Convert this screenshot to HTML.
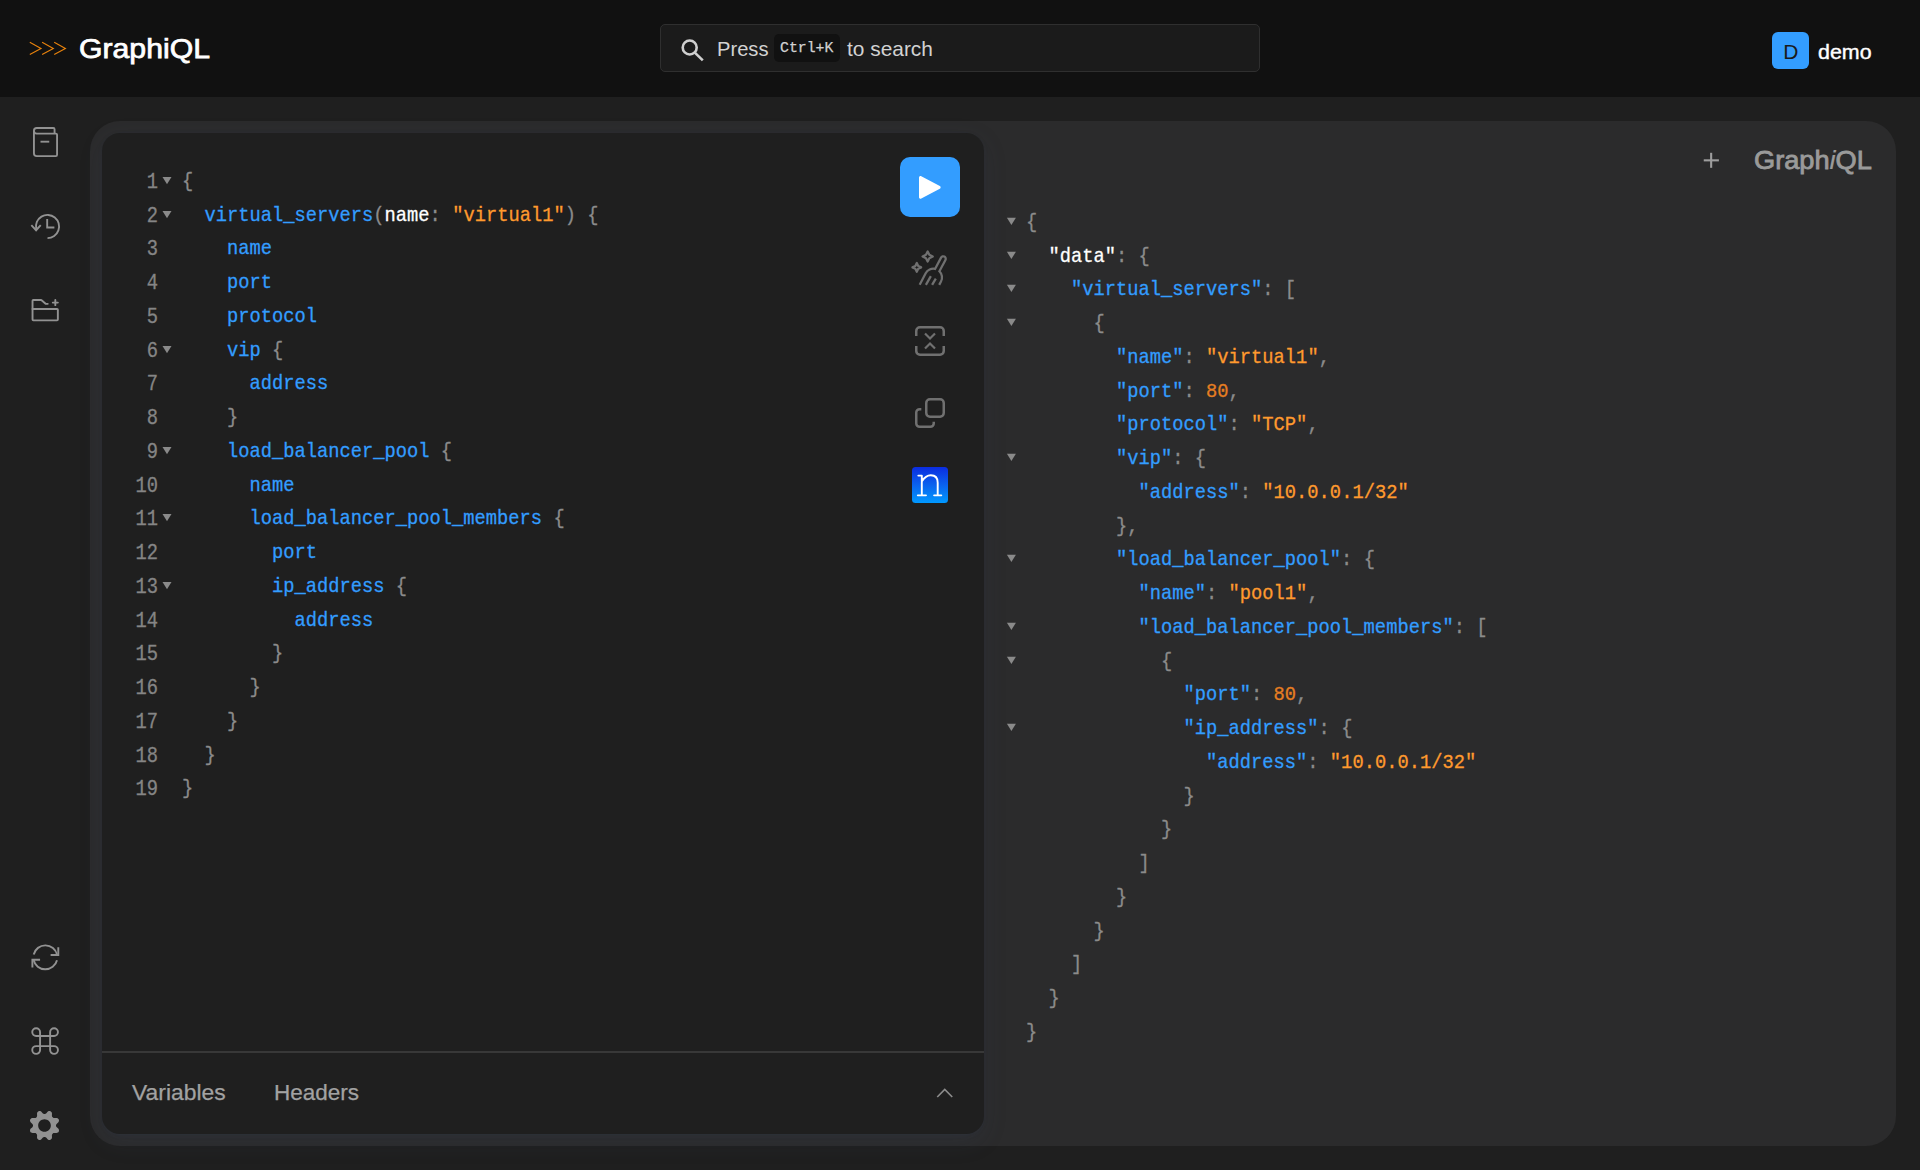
<!DOCTYPE html>
<html><head><meta charset="utf-8"><title>GraphiQL</title>
<style>
html,body{margin:0;padding:0}
body{width:1920px;height:1170px;overflow:hidden;position:relative;background:#1f1f1f;font-family:"Liberation Sans",sans-serif;color:#fff}
*{box-sizing:border-box}
.abs{position:absolute}
#hdr{position:absolute;left:0;top:0;width:1920px;height:97px;background:#111111}
#logo{position:absolute;left:78.5px;top:27.3px;font:27.6px/44px "Liberation Sans",sans-serif;color:#fff;white-space:nowrap;-webkit-text-stroke:.75px #fff;transform-origin:0 0;transform:scaleX(1.095)}
#search{position:absolute;left:660px;top:24px;width:600px;height:48px;border:1px solid #2f2f2f;border-radius:5px;background:#1b1b1b}
.stxt{position:absolute;top:33.5px;font:20.9px/30px "Liberation Sans",sans-serif;color:#d2d2d2;white-space:nowrap}
#kbd{position:absolute;left:774px;top:33.8px;width:66px;height:28.4px;border-radius:5px;background:#111}
#kbdt{position:absolute;left:780.3px;top:34.3px;font:15.5px/28px "Liberation Mono",monospace;color:#d2d2d2;white-space:nowrap;-webkit-text-stroke:.25px #d2d2d2;transform-origin:0 0;transform:scaleX(.957)}
#avatar{position:absolute;left:1772px;top:32px;width:36.5px;height:36.5px;border-radius:6px;background:#339dff}
#avl{position:absolute;left:1772.6px;top:32.6px;width:36.5px;height:36.5px;font:21px/37px "Liberation Sans",sans-serif;color:#1a1a1a;text-align:center}
#user{position:absolute;left:1818.4px;top:36.6px;font:21px/30px "Liberation Sans",sans-serif;color:#fff;white-space:nowrap;-webkit-text-stroke:.4px #fff;transform-origin:0 0;transform:scaleX(1.02)}
#sessions{position:absolute;left:90px;top:121px;width:1806px;height:1025px;border-radius:30px;background:#2b2b2c}
#editor{position:absolute;left:102px;top:133px;width:882px;height:1001px;border-radius:18px;background:#1f1f1f;box-shadow:0 7.5px 25px rgba(59,76,106,.13),0 1.7px 5.6px rgba(59,76,106,.077),0 .5px 1.7px rgba(59,76,106,.053)}
#divider{position:absolute;left:102px;top:1051.4px;width:882px;height:1.25px;background:#383838}
.tab{position:absolute;top:1076.8px;font:22.5px/32px "Liberation Sans",sans-serif;color:#a2a2a2;white-space:nowrap;-webkit-text-stroke:.25px #a2a2a2;transform-origin:0 0}
#glogo{position:absolute;left:1754px;top:139.6px;font:26.6px/40px "Liberation Sans",sans-serif;color:#9a9a9a;white-space:nowrap;-webkit-text-stroke:.85px #9a9a9a;transform-origin:0 0;transform:scaleX(1.022)}
#glogo i{-webkit-text-stroke:.2px #9a9a9a}
#play{position:absolute;left:900px;top:157px;width:60px;height:60px;border-radius:10px;background:#339dff}
#nb{position:absolute;left:912px;top:466.8px;width:36.1px;height:36.3px;border-radius:3.5px;background:linear-gradient(180deg,#0b2ce0 0%,#0a62ee 50%,#0099ff 100%)}
svg{position:absolute;overflow:visible}
.ico{color:#929292}
.tico{color:#707070}
.mono{-webkit-text-stroke:.3px currentColor}
.p{color:#8b8b8b}.f{color:#339dff}.s{color:#ff9a2e}.n{color:#e67e22}.w{color:#fff}

.mono { font: 21px/34px "Liberation Mono", monospace; white-space: pre; position:absolute; top:0; height:1170px; transform: scaleX(0.893); }
.mono .ln { position:absolute; left:0; height:34px; }
#qcode { left:181.7px; width:700px; transform-origin: 0 0; }
#qnums { left:98.0px; width:60px; transform-origin: 100% 0; color:#858585; font-size:21.5px; transform: scaleX(.872); }
#qnums .ln { left:auto; right:0; }
#rcode { left:1026.0px; width:800px; transform-origin: 0 0; }
</style></head>
<body>
<div id="hdr"></div>
<svg style="left:29px;top:41px" width="38" height="15" viewBox="0 0 38 15" fill="none" stroke="#e8820c" stroke-width="1.15"><path d="M0.8 1.3L12.0 7.45L0.8 13.6M13.1 1.3L24.3 7.45L13.1 13.6M25.2 1.3L36.4 7.45L25.2 13.6"/></svg>
<div id="logo">GraphiQL</div>
<div id="search"></div>
<svg style="left:681px;top:39.2px" width="24" height="23" viewBox="0 0 24 23" fill="none" stroke="#cfcfcf" stroke-width="2.6"><circle cx="8.7" cy="8.5" r="7"/><path d="M13.8 13.6L21.8 21.4" stroke-linecap="butt"/></svg>
<div class="stxt" style="left:717px;transform-origin:0 0;transform:scaleX(.965)">Press</div>
<div id="kbd"></div><div id="kbdt">Ctrl+K</div>
<div class="stxt" style="left:847px">to search</div>
<div id="avatar"></div><div id="avl">D</div>
<div id="user">demo</div>
<div id="sessions"></div>
<div id="editor"></div>
<div id="divider"></div>
<div class="tab" style="left:132px;transform:scaleX(1.016)">Variables</div>
<div class="tab" style="left:274px">Headers</div>
<div id="glogo">Graph<i>i</i>QL</div>

<!-- sidebar icons -->
<svg class="ico" style="left:32.5px;top:127.25px" width="25" height="30" viewBox="0 0 20 24" fill="none"><path d="M0.75 3C0.75 4.24264 1.75736 5.25 3 5.25H17.25M0.75 3C0.75 1.75736 1.75736 0.75 3 0.75H16.25C16.8023 0.75 17.25 1.19772 17.25 1.75V5.25M0.75 3V21C0.75 22.2426 1.75736 23.25 3 23.25H18.25C18.8023 23.25 19.25 22.8023 19.25 22.25V6.25C19.25 5.69771 18.8023 5.25 18.25 5.25H17.25" stroke="currentColor" stroke-width="1.5"/><line x1="13" y1="11.75" x2="6" y2="11.75" stroke="currentColor" stroke-width="1.5"/></svg>
<svg class="ico" style="left:30.2px;top:213.7px" width="30" height="25" viewBox="0 0 24 20" fill="none"><path d="M1.59375 9.52344L4.87259 12.9944L8.07872 9.41249" stroke="currentColor" stroke-width="1.5" stroke-linecap="square"/><path d="M13.75 4.7V10.75H18.75" stroke="currentColor" stroke-width="1.5" stroke-linecap="square"/><path d="M4.95427 11.9332C4.55457 10.0629 4.74441 8.11477 5.49765 6.35686C6.25089 4.59894 7.5305 3.11772 9.16034 2.11709C10.7902 1.11647 12.6901 0.645626 14.5986 0.769388C16.5071 0.893151 18.3303 1.60543 19.8172 2.80818C21.3042 4.01093 22.3818 5.64501 22.9017 7.48548C23.4216 9.32595 23.3582 11.2823 22.7203 13.0853C22.0824 14.8883 20.9013 16.4492 19.3396 17.5532C17.778 18.6572 15.9125 19.25 14 19.25" stroke="currentColor" stroke-width="1.5"/></svg>
<svg class="ico" style="left:29.9px;top:294.8px" width="30.4" height="30.4" viewBox="0 0 24 24" fill="none" stroke="currentColor" stroke-width="1.5" stroke-linecap="round" stroke-linejoin="round"><path d="M18 6H20M22 6H20M20 6V4M20 6V8"/><path d="M21.4 20H2.6C2.26863 20 2 19.7314 2 19.4V11H21.4C21.7314 11 22 11.2686 22 11.6V19.4C22 19.7314 21.7314 20 21.4 20Z"/><path d="M2 11V4.6C2 4.26863 2.26863 4 2.6 4H8.77805C8.92127 4 9.05977 4.05124 9.16852 4.14445L12.3315 6.85555C12.4402 6.94876 12.5787 7 12.722 7H14"/></svg>
<svg class="ico" style="left:29.56px;top:941.8px" width="30.7" height="30.7" viewBox="0 0 16 16" fill="none"><path d="M4.75 9.25H1.25V12.75" stroke="currentColor" stroke-linecap="square"/><path d="M11.25 6.75H14.75V3.25" stroke="currentColor" stroke-linecap="square"/><path d="M14.1036 6.65539C13.8 5.27698 13.0387 4.04193 11.9437 3.15131C10.8487 2.26069 9.48447 1.76694 8.0731 1.75043C6.66173 1.73392 5.28633 2.19563 4.17079 3.0604C3.05526 3.92516 2.26529 5.14206 1.92947 6.513" stroke="currentColor"/><path d="M1.89635 9.34461C2.20001 10.723 2.96131 11.9581 4.05631 12.8487C5.15131 13.7393 6.51553 14.2331 7.9269 14.2496C9.33827 14.2661 10.7137 13.8044 11.8292 12.9396C12.9447 12.0748 13.7347 10.8579 14.0705 9.487" stroke="currentColor"/></svg>
<svg class="ico" style="left:0;top:0" width="100" height="1170" viewBox="0 0 100 1170" fill="none" stroke="currentColor" stroke-width="1.9"><path d="M40.07 1036.02H50.13V1046.08H40.07Z M40.07 1036.02H36.16A3.91 3.91 0 1 1 40.07 1032.11Z M50.13 1036.02V1032.11A3.91 3.91 0 1 1 54.04 1036.02Z M50.13 1046.08H54.04A3.91 3.91 0 1 1 50.13 1049.99Z M40.07 1046.08V1049.99A3.91 3.91 0 1 1 36.16 1046.08Z"/></svg>
<svg class="ico" style="left:29.9px;top:1110.6px" width="29" height="29" viewBox="0 0 20 20" fill="currentColor" fill-rule="evenodd"><path d="M9.29186 1.92702C9.06924 1.82745 8.87014 1.68202 8.70757 1.50024L7.86631 0.574931C7.62496 0.309957 7.30773 0.12592 6.95791 0.0479385C6.60809 -0.0300431 6.24274 0.00182978 5.91171 0.139208C5.58068 0.276585 5.3001 0.512774 5.10828 0.815537C4.91645 1.1183 4.82272 1.47288 4.83989 1.83089L4.90388 3.08019C4.91612 3.32348 4.87721 3.56662 4.78968 3.79394C4.70215 4.02126 4.56794 4.2277 4.39571 4.39994C4.22347 4.57219 4.01704 4.7064 3.78974 4.79394C3.56243 4.88147 3.3193 4.92038 3.07603 4.90814L1.8308 4.84414C1.47162 4.82563 1.11553 4.91881 0.811445 5.11086C0.507359 5.30292 0.270203 5.58443 0.132561 5.91671C-0.00508149 6.249 -0.0364554 6.61576 0.0427496 6.9666C0.121955 7.31744 0.307852 7.63514 0.5749 7.87606L1.50016 8.71204C1.68193 8.87461 1.82735 9.07373 1.92692 9.29636C2.02648 9.51898 2.07794 9.76012 2.07794 10.004C2.07794 10.2479 2.02648 10.489 1.92692 10.7116C1.82735 10.9343 1.68193 11.1334 1.50016 11.296L0.5749 12.1319C0.309856 12.3729 0.125575 12.6898 0.0471809 13.0393C-0.0312128 13.3888 9.64098e-05 13.754 0.13684 14.0851C0.273583 14.4162 0.509106 14.6971 0.811296 14.8894C1.11349 15.0817 1.46764 15.1762 1.82546 15.1599L3.0707 15.0959C3.31397 15.0836 3.5571 15.1225 3.7844 15.2101C4.01171 15.2976 4.21814 15.4318 4.39037 15.6041C4.56261 15.7763 4.69682 15.9827 4.78435 16.2101C4.87188 16.4374 4.91078 16.6805 4.89855 16.9238L4.83455 18.1691C4.81605 18.5283 4.90921 18.8844 5.10126 19.1885C5.2933 19.4926 5.5748 19.7298 5.90707 19.8674C6.23934 20.0051 6.60608 20.0365 6.9569 19.9572C7.30772 19.878 7.6254 19.6921 7.86631 19.4251L8.7129 18.4998C8.87547 18.318 9.07458 18.1725 9.29719 18.073C9.51981 17.9734 9.76093 17.9219 10.0048 17.9219C10.2487 17.9219 10.4898 17.9734 10.7124 18.073C10.935 18.1725 11.1341 18.318 11.2967 18.4998L12.1326 19.4251C12.3735 19.6921 12.6912 19.878 13.042 19.9572C13.3929 20.0365 13.7596 20.0051 14.0919 19.8674C14.4241 19.7298 14.7056 19.4926 14.8977 19.1885C15.0897 18.8844 15.1829 18.5283 15.1644 18.1691L15.1004 16.9238C15.0882 16.6805 15.1271 16.4374 15.2146 16.2101C15.3021 15.9827 15.4363 15.7763 15.6086 15.6041C15.7808 15.4318 15.9872 15.2976 16.2145 15.2101C16.4418 15.1225 16.685 15.0836 16.9282 15.0959L18.1735 15.1599C18.5326 15.1784 18.8887 15.0852 19.1928 14.8931C19.4969 14.7011 19.7341 14.4196 19.8717 14.0873C20.0093 13.755 20.0407 13.3882 19.9615 13.0374C19.8823 12.6866 19.6964 12.3689 19.4294 12.1279L18.5041 11.292C18.3223 11.1294 18.1769 10.9303 18.0774 10.7076C17.9778 10.485 17.9263 10.2439 17.9263 10C17.9263 9.75612 17.9778 9.51499 18.0774 9.29236C18.1769 9.06973 18.3223 8.87062 18.5041 8.70804L19.4294 7.87206C19.6964 7.63114 19.8823 7.31344 19.9615 6.9626C20.0407 6.61176 20.0093 6.245 19.8717 5.91271C19.7341 5.58043 19.4969 5.29892 19.1928 5.10686C18.8887 4.91481 18.5326 4.82163 18.1735 4.84014L16.9282 4.90414C16.685 4.91638 16.4418 4.87747 16.2145 4.78994C15.9872 4.7024 15.7808 4.56818 15.6086 4.39594C15.4363 4.2237 15.3021 4.01726 15.2146 3.78994C15.1271 3.56262 15.0882 3.31948 15.1004 3.07619L15.1644 1.83089C15.1829 1.4717 15.0897 1.11559 14.8977 0.811487C14.7056 0.507385 14.4241 0.270217 14.0919 0.132568C13.7596 -0.00508182 13.3929 -0.0364573 13.042 0.0427519C12.6912 0.121961 12.3735 0.307869 12.1326 0.574931L11.2914 1.50024C11.1288 1.68202 10.9297 1.82745 10.7071 1.92702C10.4845 2.02659 10.2433 2.07805 9.99947 2.07805C9.7556 2.07805 9.51448 2.02659 9.29186 1.92702ZM14.3745 10C14.3745 12.4162 12.4159 14.375 9.99977 14.375C7.58365 14.375 5.62501 12.4162 5.62501 10C5.62501 7.58375 7.58365 5.625 9.99977 5.625C12.4159 5.625 14.3745 7.58375 14.3745 10Z"/></svg>

<!-- toolbar -->
<div id="play"></div>
<svg style="left:918.7px;top:174.5px" width="25" height="25" viewBox="0 0 16 16" fill="#fff"><path d="M1.32226e-07 1.6609C7.22332e-08 0.907329 0.801887 0.424528 1.46789 0.777117L13.3306 7.05735C14.0401 7.43297 14.0401 8.44911 13.3306 8.82473L1.46789 15.105C0.801886 15.4576 1.36076e-06 14.9748 1.30077e-06 14.2212L1.32226e-07 1.6609Z"/></svg>
<svg class="tico" style="left:911.4px;top:250.35px" width="36.2" height="36.2" viewBox="0 0 25 25" fill="none" stroke="currentColor" stroke-width="1.5625"><path d="M10.2852 24.0745L13.7139 18.0742"/><path d="M14.5742 24.0749L17.1457 19.7891"/><path d="M19.4868 24.0735L20.7229 21.7523C21.3259 20.6143 21.5457 19.3122 21.3496 18.0394C21.1535 16.7666 20.5519 15.591 19.6342 14.6874L23.7984 6.87853C24.0123 6.47728 24.0581 6.00748 23.9256 5.57249C23.7932 5.1375 23.4933 4.77294 23.0921 4.55901C22.6908 4.34509 22.221 4.29932 21.7861 4.43178C21.3511 4.56424 20.9865 4.86408 20.7726 5.26533L16.6084 13.0742C15.3474 12.8142 14.0362 12.9683 12.8699 13.5135C11.7035 14.0586 10.7443 14.9658 10.135 16.1L6 24.0735"/><path d="M4 15L5 13L7 12L5 11L4 9L3 11L1 12L3 13L4 15Z" stroke-linejoin="round"/><path d="M11.5 8L12.6662 5.6662L15 4.5L12.6662 3.3338L11.5 1L10.3338 3.3338L8 4.5L10.3338 5.6662L11.5 8Z" stroke-linejoin="round"/></svg>
<svg class="tico" style="left:915px;top:325.9px" width="30" height="30" viewBox="0 0 18 18" fill="none" stroke="currentColor" stroke-width="1.5"><path d="M17.2492 6V2.9569C17.2492 1.73806 16.2611 0.75 15.0423 0.75L2.9569 0.75C1.73806 0.75 0.75 1.73806 0.75 2.9569L0.75 6"/><path d="M0.749873 12V15.0431C0.749873 16.2619 1.73794 17.25 2.95677 17.25H15.0421C16.261 17.25 17.249 16.2619 17.249 15.0431V12"/><path d="M6 4.5L9 7.5L12 4.5" stroke-width="1.3"/><path d="M12 13.5L9 10.5L6 13.5" stroke-width="1.3"/></svg>
<svg class="tico" style="left:915px;top:397.9px" width="30" height="30" viewBox="0 0 18 18" fill="none" stroke="currentColor" stroke-width="1.5"><path d="M11.25 14.2105V15.235C11.25 16.3479 10.3479 17.25 9.23501 17.25H2.76499C1.65214 17.25 0.75 16.3479 0.75 15.235L0.75 8.76499C0.75 7.65214 1.65214 6.75 2.76499 6.75L3.78947 6.75"/><rect x="6.75" y="0.75" width="10.5" height="10.5" rx="2.2069"/></svg>
<div id="nb"></div><svg style="left:0;top:0" width="1000" height="600" viewBox="0 0 1000 600" fill="none" stroke="#fff" stroke-width="1.9" stroke-linecap="round" stroke-linejoin="round"><path d="M918.3 475.6H921.8V495.35M917.8 495.35H926.0M921.8 481.4C924.2 477.5 927.2 475.2 930.8 475.2C935.2 475.2 937.7 478.1 937.7 482.7V495.35M934.1 495.35H941.3"/></svg>
<svg style="left:1700px;top:150px" width="24" height="20" viewBox="1700 150 24 20" fill="#9e9e9e"><rect x="1703.75" y="159.3" width="15.15" height="2.1"/><rect x="1710.1" y="152.8" width="2.1" height="15"/></svg>
<svg style="left:936.25px;top:1086.6px;color:#8c8c8c" width="17.5" height="11.25" viewBox="0 0 14 9" fill="none" stroke="currentColor" stroke-width="1.3"><path d="M13 8L7 2L1 8"/></svg>

<div id="qnums" class="mono"><div class="ln" style="top:165px">1</div><div class="ln" style="top:199px">2</div><div class="ln" style="top:232px">3</div><div class="ln" style="top:266px">4</div><div class="ln" style="top:300px">5</div><div class="ln" style="top:334px">6</div><div class="ln" style="top:367px">7</div><div class="ln" style="top:401px">8</div><div class="ln" style="top:435px">9</div><div class="ln" style="top:469px">10</div><div class="ln" style="top:502px">11</div><div class="ln" style="top:536px">12</div><div class="ln" style="top:570px">13</div><div class="ln" style="top:604px">14</div><div class="ln" style="top:637px">15</div><div class="ln" style="top:671px">16</div><div class="ln" style="top:705px">17</div><div class="ln" style="top:739px">18</div><div class="ln" style="top:772px">19</div></div>
<div id="qcode" class="mono"><div class="ln" style="top:165px"><span class="p">{</span></div><div class="ln" style="top:199px">  <span class="f">virtual_servers</span><span class="p">(</span><span class="w">name</span><span class="p">:</span> <span class="s">"virtual1"</span><span class="p">)</span> <span class="p">{</span></div><div class="ln" style="top:232px">    <span class="f">name</span></div><div class="ln" style="top:266px">    <span class="f">port</span></div><div class="ln" style="top:300px">    <span class="f">protocol</span></div><div class="ln" style="top:334px">    <span class="f">vip</span> <span class="p">{</span></div><div class="ln" style="top:367px">      <span class="f">address</span></div><div class="ln" style="top:401px">    <span class="p">}</span></div><div class="ln" style="top:435px">    <span class="f">load_balancer_pool</span> <span class="p">{</span></div><div class="ln" style="top:469px">      <span class="f">name</span></div><div class="ln" style="top:502px">      <span class="f">load_balancer_pool_members</span> <span class="p">{</span></div><div class="ln" style="top:536px">        <span class="f">port</span></div><div class="ln" style="top:570px">        <span class="f">ip_address</span> <span class="p">{</span></div><div class="ln" style="top:604px">          <span class="f">address</span></div><div class="ln" style="top:637px">        <span class="p">}</span></div><div class="ln" style="top:671px">      <span class="p">}</span></div><div class="ln" style="top:705px">    <span class="p">}</span></div><div class="ln" style="top:739px">  <span class="p">}</span></div><div class="ln" style="top:772px"><span class="p">}</span></div></div>
<div id="rcode" class="mono"><div class="ln" style="top:206px"><span class="p">{</span></div><div class="ln" style="top:240px">  <span class="w">"data"</span><span class="p">:</span> <span class="p">{</span></div><div class="ln" style="top:273px">    <span class="f">"virtual_servers"</span><span class="p">:</span> <span class="p">[</span></div><div class="ln" style="top:307px">      <span class="p">{</span></div><div class="ln" style="top:341px">        <span class="f">"name"</span><span class="p">:</span> <span class="s">"virtual1"</span><span class="p">,</span></div><div class="ln" style="top:375px">        <span class="f">"port"</span><span class="p">:</span> <span class="n">80</span><span class="p">,</span></div><div class="ln" style="top:408px">        <span class="f">"protocol"</span><span class="p">:</span> <span class="s">"TCP"</span><span class="p">,</span></div><div class="ln" style="top:442px">        <span class="f">"vip"</span><span class="p">:</span> <span class="p">{</span></div><div class="ln" style="top:476px">          <span class="f">"address"</span><span class="p">:</span> <span class="s">"10.0.0.1/32"</span></div><div class="ln" style="top:510px">        <span class="p">},</span></div><div class="ln" style="top:543px">        <span class="f">"load_balancer_pool"</span><span class="p">:</span> <span class="p">{</span></div><div class="ln" style="top:577px">          <span class="f">"name"</span><span class="p">:</span> <span class="s">"pool1"</span><span class="p">,</span></div><div class="ln" style="top:611px">          <span class="f">"load_balancer_pool_members"</span><span class="p">:</span> <span class="p">[</span></div><div class="ln" style="top:645px">            <span class="p">{</span></div><div class="ln" style="top:678px">              <span class="f">"port"</span><span class="p">:</span> <span class="n">80</span><span class="p">,</span></div><div class="ln" style="top:712px">              <span class="f">"ip_address"</span><span class="p">:</span> <span class="p">{</span></div><div class="ln" style="top:746px">                <span class="f">"address"</span><span class="p">:</span> <span class="s">"10.0.0.1/32"</span></div><div class="ln" style="top:780px">              <span class="p">}</span></div><div class="ln" style="top:813px">            <span class="p">}</span></div><div class="ln" style="top:847px">          <span class="p">]</span></div><div class="ln" style="top:881px">        <span class="p">}</span></div><div class="ln" style="top:915px">      <span class="p">}</span></div><div class="ln" style="top:948px">    <span class="p">]</span></div><div class="ln" style="top:982px">  <span class="p">}</span></div><div class="ln" style="top:1016px"><span class="p">}</span></div></div>
<svg style="left:0;top:0" width="1920" height="1170" viewBox="0 0 1920 1170" fill="#8a8a8a"><path d="M162.50 176.95H171.50L167.00 184.25Z"/><path d="M162.50 210.95H171.50L167.00 218.25Z"/><path d="M162.50 345.95H171.50L167.00 353.25Z"/><path d="M162.50 446.95H171.50L167.00 454.25Z"/><path d="M162.50 513.95H171.50L167.00 521.25Z"/><path d="M162.50 581.95H171.50L167.00 589.25Z"/><path d="M1006.90 217.75H1015.90L1011.40 225.05Z"/><path d="M1006.90 251.75H1015.90L1011.40 259.05Z"/><path d="M1006.90 284.75H1015.90L1011.40 292.05Z"/><path d="M1006.90 318.75H1015.90L1011.40 326.05Z"/><path d="M1006.90 453.75H1015.90L1011.40 461.05Z"/><path d="M1006.90 554.75H1015.90L1011.40 562.05Z"/><path d="M1006.90 622.75H1015.90L1011.40 630.05Z"/><path d="M1006.90 656.75H1015.90L1011.40 664.05Z"/><path d="M1006.90 723.75H1015.90L1011.40 731.05Z"/></svg>
</body></html>
